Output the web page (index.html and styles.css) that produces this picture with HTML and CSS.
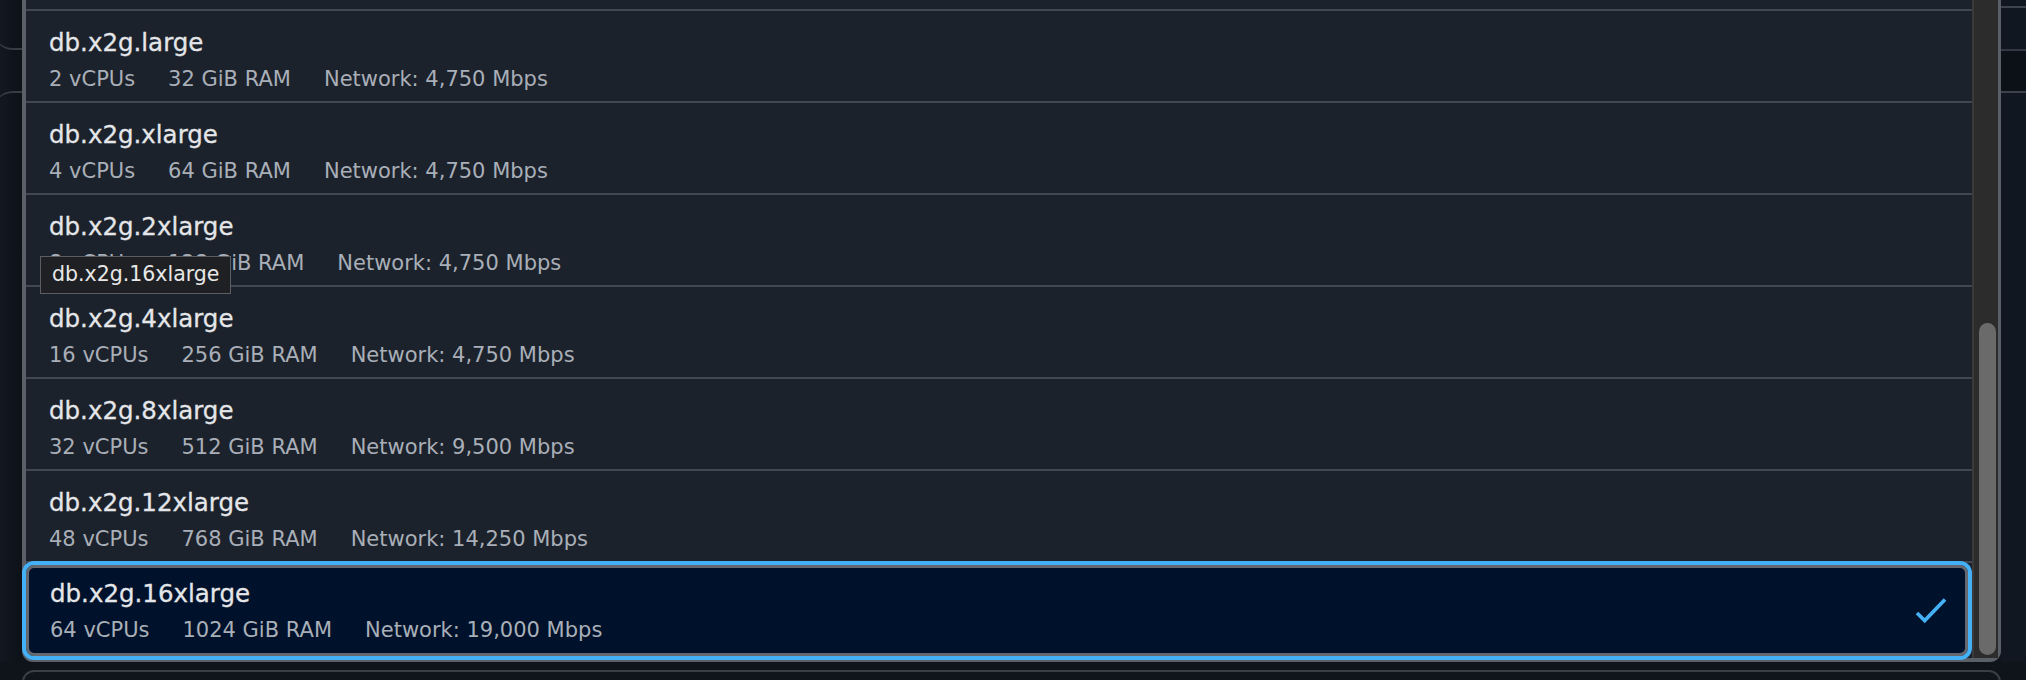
FILE: index.html
```html
<!DOCTYPE html>
<html lang="en">
<head>
<meta charset="utf-8">
<title>Instance class</title>
<link rel="stylesheet" href="styles.css">
</head>
<body>
<div class="page">
  <div class="top">
    <div class="gutter gutter-left">
      <div class="ghost ghost-a"></div>
      <div class="ghost ghost-b"></div>
    </div>
    <div class="dropdown">
      <ul class="list">
        <li class="option option-tail"></li>
        <li class="option">
          <div class="option-text">
            <div class="label">db.x2g.large</div>
            <div class="tags"><span>2 vCPUs</span><span>32 GiB RAM</span><span>Network: 4,750 Mbps</span></div>
          </div>
        </li>
        <li class="option">
          <div class="option-text">
            <div class="label">db.x2g.xlarge</div>
            <div class="tags"><span>4 vCPUs</span><span>64 GiB RAM</span><span>Network: 4,750 Mbps</span></div>
          </div>
        </li>
        <li class="option">
          <div class="option-text">
            <div class="label">db.x2g.2xlarge</div>
            <div class="tags"><span>8 vCPUs</span><span>128 GiB RAM</span><span>Network: 4,750 Mbps</span></div>
          </div>
        </li>
        <li class="option">
          <div class="option-text">
            <div class="label">db.x2g.4xlarge</div>
            <div class="tags"><span>16 vCPUs</span><span>256 GiB RAM</span><span>Network: 4,750 Mbps</span></div>
          </div>
        </li>
        <li class="option">
          <div class="option-text">
            <div class="label">db.x2g.8xlarge</div>
            <div class="tags"><span>32 vCPUs</span><span>512 GiB RAM</span><span>Network: 9,500 Mbps</span></div>
          </div>
        </li>
        <li class="option">
          <div class="option-text">
            <div class="label">db.x2g.12xlarge</div>
            <div class="tags"><span>48 vCPUs</span><span>768 GiB RAM</span><span>Network: 14,250 Mbps</span></div>
          </div>
        </li>
        <li class="option option-selected">
          <div class="option-text">
            <div class="label">db.x2g.16xlarge</div>
            <div class="tags"><span>64 vCPUs</span><span>1024 GiB RAM</span><span>Network: 19,000 Mbps</span></div>
          </div>
          <svg class="check" width="32" height="32" viewBox="0 0 32 32" aria-hidden="true">
            <polyline points="2,17 9.7,24.6 30,3.5" fill="none" stroke="#44b1f6" stroke-width="3.6"/>
          </svg>
        </li>
      </ul>
      <div class="scrollbar"><div class="thumb"></div></div>
    </div>
    <div class="gutter gutter-right">
      <div class="ghost-r ghost-r1"></div>
      <div class="ghost-r ghost-r2"></div>
    </div>
  </div>
  <div class="next-field"></div>
</div>
<div class="tooltip">db.x2g.16xlarge</div>
</body>
</html>
```
FILE: styles.css
```css
html, body {
  margin: 0;
  padding: 0;
  width: 2026px;
  height: 680px;
  overflow: hidden;
  background: #0f141b;
  font-family: "DejaVu Sans", sans-serif;
}

.page {
  display: flex;
  flex-direction: column;
}

.top {
  display: flex;
  align-items: stretch;
}

.gutter {
  flex: none;
  overflow: hidden;
}

.gutter-left {
  width: 22px;
  background: linear-gradient(90deg, #121821, #0d1118);
}

.ghost {
  margin-left: -7px;
  border-color: #363c46;
  border-style: solid;
  border-width: 0;
}

.ghost-a {
  height: 48px;
  border-bottom-width: 2px;
  border-bottom-left-radius: 20px;
}

.ghost-b {
  margin-top: 41px;
  height: 60px;
  border-top-width: 2px;
  border-top-left-radius: 20px;
}

.gutter-right {
  width: 25px;
  background: #111721;
}

.ghost-r1 {
  height: 6px;
  border-bottom: 2px solid #3d434d;
}

.ghost-r2 {
  margin-top: 41px;
  height: 40px;
  background: #0c1118;
  border-top: 2px solid #333944;
  border-bottom: 2px solid #3d434d;
}

.dropdown {
  flex: 1;
  display: flex;
  border: 4px solid #5b5f67;
  border-top: none;
  border-right-width: 3px;
  border-radius: 0 0 11px 11px;
  background: #1c222b;
}

.list {
  flex: 1;
  list-style: none;
  margin: 0;
  padding: 0;
  min-width: 0;
}

.option {
  box-sizing: border-box;
  height: 92px;
  padding: 16px 24px 0 23px;
  border-bottom: 2px solid #414852;
  display: flex;
  align-items: flex-start;
}

.option-tail {
  height: 11px;
  padding: 0;
}

.option-text {
  flex: 1;
}

.label {
  font-size: 24.5px;
  line-height: 32px;
  color: #e4e6e9;
  white-space: nowrap;
  -webkit-text-stroke: 0.3px #e4e6e9;
}

.tags {
  margin-top: 6px;
  display: flex;
  gap: 33px;
  font-size: 21px;
  line-height: 28px;
  color: #a9afb8;
  white-space: nowrap;
}

.option-selected {
  position: relative;
  height: 99px;
  margin: -2px 0 -2px -4px;
  padding: 13px 0 0 24px;
  border: 4px solid #44b1f6;
  border-radius: 12px;
  box-shadow: inset 0 0 0 3px #65696f;
  background: #00122b;
  align-items: center;
}

.option-selected .option-text {
  align-self: flex-start;
}

.check {
  flex: none;
  margin: 0 21px 10px 0;
}

.scrollbar {
  flex: none;
  box-sizing: border-box;
  width: 26px;
  border-left: 2px solid #3a3a3a;
  background: #2c2c2c;
  display: flex;
  flex-direction: column;
  padding: 0 2px 0 5px;
}

.thumb {
  margin-top: auto;
  margin-bottom: 3px;
  height: 332px;
  border-radius: 9px;
  background: #6a6a6a;
}

.next-field {
  margin: 8px 25px 0 22px;
  height: 40px;
  border: 2px solid #3a3f47;
  border-radius: 12px;
  background: #10151c;
}

.tooltip {
  position: absolute;
  left: 40px;
  top: 256px;
  padding: 0 11px 2px 11px;
  border: 1px solid #5b5d62;
  background: #1f2023;
  color: #e8e8e8;
  font-size: 20.5px;
  line-height: 34px;
  white-space: nowrap;
}
```
